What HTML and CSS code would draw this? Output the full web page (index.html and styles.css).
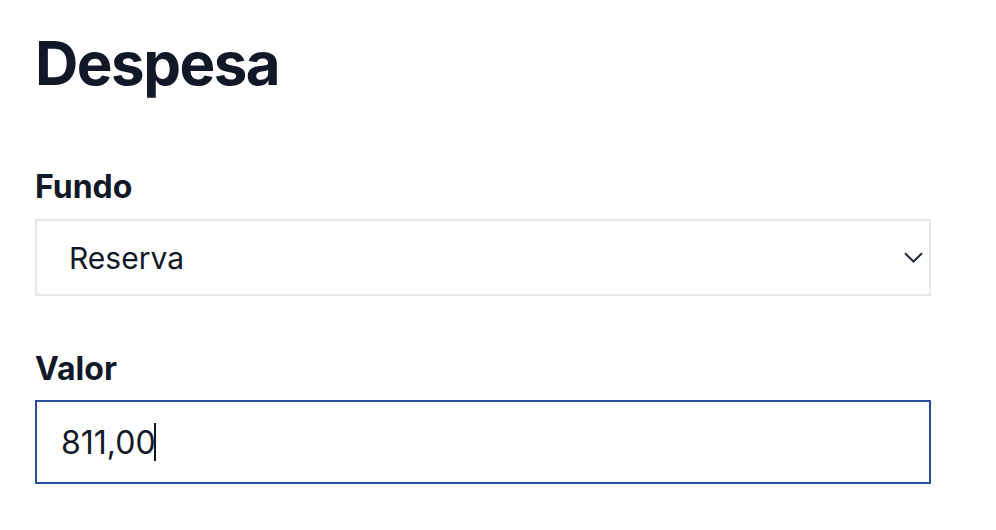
FILE: index.html
```html
<!DOCTYPE html>
<html lang="pt">
  <head>
    <meta charset="UTF-8" />
    <title>Despesa</title>
    <link rel="stylesheet" href="styles.css">
  </head>
  <body>
    <div class="wrapper">
      <h1 class="page-title">Despesa</h1>
      <form class="expense-form">
        <label class="field-label" for="fundo">Fundo</label>
        <div class="select-wrap">
          <select id="fundo" class="field-select">
            <option>Reserva</option>
            <option>Corrente</option>
          </select>
          <svg class="chevron" width="19" height="11" viewBox="0 0 19 11">
            <path d="M1 1.2 L9.5 9.5 L18 1.2" fill="none" stroke="#1f2937" stroke-width="2"/>
          </svg>
        </div>
        <label class="field-label valor-label" for="valor">Valor</label>
        <div class="input-wrap">
          <input id="valor" class="field-input" type="text" value="811,00" />
          <span class="caret"></span>
        </div>
      </form>
    </div>
  </body>
</html>
```

FILE: styles.css
```css
:root {
  --ink: #111827;
  --line: #e5e7eb;
  --focus: #2a4f9b;
}

body {
  margin: 0;
  background: #fff;
  color: var(--ink);
  font-family: Inter, 'Noto Sans', sans-serif;
}

.wrapper {
  width: 896px;
  padding: 33px 35px 0;
}

.page-title {
  margin: 0;
  font-size: 60px;
  line-height: 60px;
  font-weight: 700;
  letter-spacing: -0.025em;
}

.expense-form {
  display: flex;
  flex-direction: column;
  margin-top: 74px;
}

.field-label {
  font-size: 32px;
  line-height: 40px;
  font-weight: 700;
  margin-bottom: 12px;
}

.valor-label {
  margin-top: 53px;
  margin-bottom: 11px;
}

.select-wrap,
.input-wrap {
  position: relative;
}

.field-select,
.field-input {
  box-sizing: border-box;
  width: 100%;
  font-family: inherit;
  color: var(--ink);
  background: #fff;
  border-radius: 0;
  outline: none;
  margin: 0;
}

.field-select {
  appearance: none;
  -webkit-appearance: none;
  height: 77px;
  font-size: 30px;
  border: 2px solid var(--line);
  padding: 0 60px 0 32px;
}

.chevron {
  position: absolute;
  right: 8px;
  top: 33px;
  pointer-events: none;
}

.field-input {
  height: 84px;
  font-size: 32px;
  border: 2px solid var(--focus);
  padding: 0 24px;
}

.caret {
  position: absolute;
  left: 119px;
  top: 23px;
  width: 2px;
  height: 38px;
  background: var(--ink);
}
```
